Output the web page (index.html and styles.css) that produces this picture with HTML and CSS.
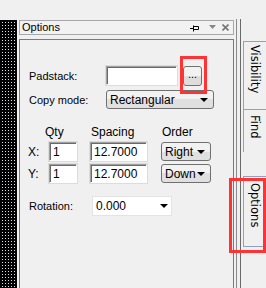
FILE: index.html
```html
<!DOCTYPE html>
<html lang="en">
<head>
    <meta charset="UTF-8">
    <title>Options</title>
    <link rel="stylesheet" href="styles.css">
</head>
<body>
    <div class="topbar"></div>
    <div class="main">
        <div class="canvas"></div>
        <div class="dock">
            <div class="dock-header">
                <span class="dock-title">Options</span>
                <span class="dock-buttons">
                    <svg class="pin" width="9" height="7" viewBox="0 0 9 7">
                        <path d="M0 3.5H3.5M3.5 0.5V6.5M3.5 1.5H8.5V4.5H3.5" fill="none" stroke="#000" stroke-width="1"/>
                    </svg>
                    <svg class="menu" width="7" height="4" viewBox="0 0 7 4">
                        <path d="M0 0H7L3.5 4Z" fill="#888"/>
                    </svg>
                    <svg class="close" width="7" height="7" viewBox="0 0 7 7">
                        <path d="M0.5 0.5L6.5 6.5M6.5 0.5L0.5 6.5" stroke="#777" stroke-width="1.6"/>
                    </svg>
                </span>
            </div>
            <div class="dock-body">
                <div class="row padstack-row">
                    <label class="label">Padstack:</label>
                    <div class="input padstack-input"></div>
                    <button class="dots-btn">...</button>
                </div>
                <div class="row copy-row">
                    <label class="label">Copy mode:</label>
                    <div class="select copy-select"><span>Rectangular</span><i class="arrow"></i></div>
                </div>

                <div class="qty-grid">
                    <span></span>
                    <span class="col-head qty-head">Qty</span>
                    <span></span>
                    <span class="col-head">Spacing</span>
                    <span></span>
                    <span class="col-head">Order</span>

                    <span class="axis">X:</span>
                    <div class="input">1</div>
                    <span></span>
                    <div class="input">12.7000</div>
                    <span></span>
                    <div class="select"><span>Right</span><i class="arrow"></i></div>

                    <span class="axis">Y:</span>
                    <div class="input">1</div>
                    <span></span>
                    <div class="input">12.7000</div>
                    <span></span>
                    <div class="select"><span>Down</span><i class="arrow"></i></div>
                </div>

                <div class="row rotation-row">
                    <label class="label rotation-label">Rotation:</label>
                    <div class="combo"><span>0.000</span><i class="arrow"></i></div>
                </div>
            </div>
        </div>
        <div class="splitter"></div>
        <div class="tabs">
            <div class="tab tab-visibility"><span>Visibility</span></div>
            <div class="tab tab-find"><span>Find</span></div>
            <div class="tab tab-options"><span>Options</span></div>
        </div>
    </div>

    <!-- annotation boxes -->
    <div class="mark mark-dots"></div>
    <div class="mark mark-tab"></div>
</body>
</html>
```

FILE: styles.css
```css
body {
    margin: 0;
    width: 266px;
    height: 288px;
    overflow: hidden;
    background: #f0f0f0;
    font-family: 'Liberation Sans', Arial, sans-serif;
    font-size: 11px;
    color: #000;
    position: relative;
}

.topbar {
    height: 19px;
}

.main {
    display: flex;
    height: 269px;
}

/* black grid canvas at the left */
.canvas {
    width: 17px;
    margin-top: 1px;
    background-color: #000;
    background-image:
        linear-gradient(#000 2px, transparent 2px),
        linear-gradient(90deg, #000 2px, #dde 2px);
    background-size: 3px 3px;
}

.dock {
    width: 215px;
    margin-left: 2px;
    display: flex;
    flex-direction: column;
}

.dock-header {
    height: 13px;
    margin-top: 1px;
    border: 1px solid #a8a8a8;
    display: flex;
    align-items: center;
    justify-content: space-between;
    padding: 0 4px 0 2px;
    background: #f2f2f2;
}

.dock-title {
    font-size: 11px;
    line-height: 13px;
}

.dock-buttons {
    display: flex;
    align-items: center;
}

.pin {
    margin-right: 10px;
    margin-top: 2px;
}

.menu {
    margin-right: 6px;
    margin-top: -2px;
}

.dock-body {
    flex: 1;
    margin-top: 4px;
    border: 1px solid #7a7a7a;
    border-bottom: none;
    padding: 25px 0 0 9px;
}

.row {
    display: flex;
    align-items: center;
}

.label {
    width: 77px;
}

.input {
    box-sizing: border-box;
    height: 19px;
    background: #fff;
    border: 1px solid;
    border-color: #a0a0a0 #fff #fff #a0a0a0;
    box-shadow: inset 1px 1px 0 #6a6a6a, 0 0 0 1px #dcdcdc;
    padding: 2px 0 0 3px;
    font-size: 12px;
    line-height: 14px;
}

.padstack-input {
    width: 71px;
}

.dots-btn {
    box-sizing: border-box;
    width: 19px;
    height: 20px;
    margin: 1px 0 0 6px;
    padding: 0 0 4px;
    border: 1px solid #707070;
    border-radius: 3px;
    background: linear-gradient(#f2f2f2 50%, #dddddd 50%);
    font-family: inherit;
    font-size: 11px;
    line-height: 11px;
}

.copy-row {
    margin-top: 4px;
}

.select {
    box-sizing: border-box;
    height: 19px;
    border: 1px solid #707070;
    border-radius: 3px;
    background: linear-gradient(#f2f2f2 50%, #e0e0e0 50%);
    display: flex;
    align-items: center;
    justify-content: space-between;
    padding: 0 5px 0 3px;
    font-size: 12px;
}

.copy-select {
    width: 108px;
}

.arrow {
    width: 0;
    height: 0;
    border-left: 4px solid transparent;
    border-right: 4px solid transparent;
    border-top: 4px solid #000;
}

.qty-grid {
    display: grid;
    grid-template-columns: 21px 28px 13px 57px 14px 50px;
    grid-template-rows: 15px 19px 19px;
    row-gap: 3px;
    margin: 15px 0 0 -1px;
    align-items: center;
}

.col-head {
    font-size: 12px;
    padding-left: 1px;
}

.qty-head {
    margin-left: -5px;
}

.axis {
    font-size: 12px;
}

.rotation-row {
    margin-top: 13px;
}

.rotation-label {
    width: 63px;
}

.combo {
    box-sizing: border-box;
    width: 80px;
    height: 20px;
    background: #fff;
    border: 1px solid #e3e3e3;
    display: flex;
    align-items: center;
    justify-content: space-between;
    padding: 0 3px 0 3px;
    font-size: 12px;
}

.splitter {
    width: 3px;
    margin-left: 2px;
    border-left: 1px solid #8a8a8a;
    border-right: 1px solid #6a6a6a;
}

/* vertical tab strip */
.tabs {
    flex: 1;
    margin-left: 2px;
    padding-top: 22px;
    display: flex;
    flex-direction: column;
}

.tab {
    border-left: 1px solid #8fa3bf;
    border-top: 1px solid #8fa3bf;
    font-family: 'DejaVu Sans', sans-serif;
    font-size: 11.5px;
    display: flex;
    justify-content: center;
}

.tab span {
    writing-mode: vertical-rl;
    padding-top: 3px;
}

.tab-visibility {
    height: 67px;
}

.tab-find {
    height: 40px;
    padding-top: 2px;
}

.tab-options {
    margin-top: 24px;
    height: 66px;
    border-bottom: 1px solid #8fa3bf;
    padding-top: 3px;
}

/* red highlight boxes */
.mark {
    position: absolute;
    border: 3px solid #f33;
    box-sizing: border-box;
}

.mark-dots {
    left: 180px;
    top: 56px;
    width: 27px;
    height: 38px;
}

.mark-tab {
    left: 229px;
    top: 178px;
    width: 37px;
    height: 75px;
}
```
